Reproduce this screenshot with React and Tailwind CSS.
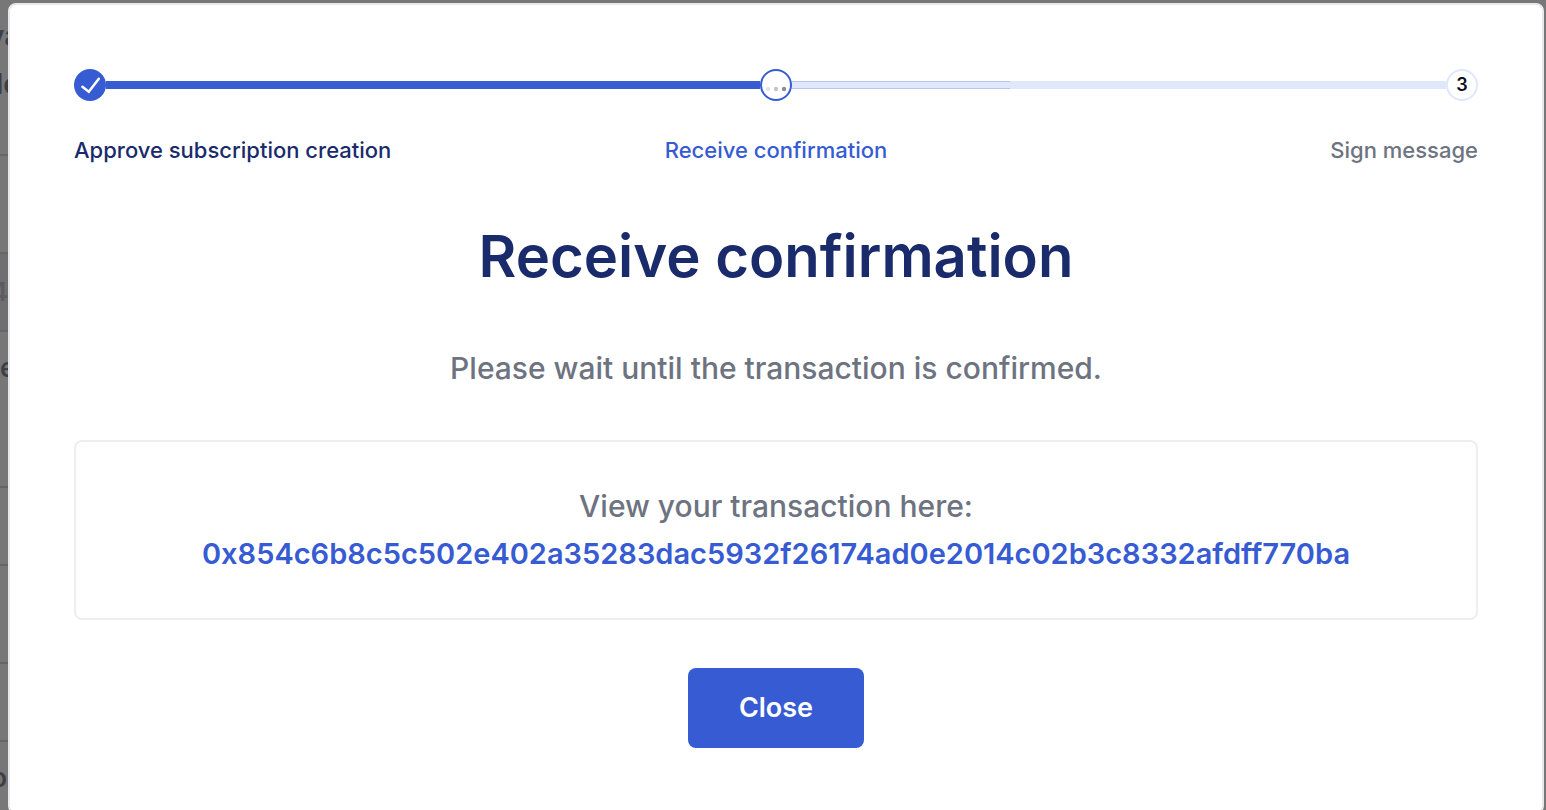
const TX_HASH = '0x854c6b8c5c502e402a35283dac5932f26174ad0e2014c02b3c8332afdff770ba';

function PageEdge() {
  return (
    <div
      aria-hidden="true"
      className="flex w-2 shrink-0 flex-col overflow-hidden whitespace-nowrap text-[26px] leading-8 font-semibold text-[#3d3f47]"
    >
      <div className="flex h-[156px] flex-col items-start border-b-2 border-[#686868] pt-3 text-[28px] leading-12">
        <span className="-ml-3">va</span>
        <span className="-ml-1">lo</span>
      </div>
      <div className="h-[98px] border-b-2 border-[#666666]" />
      <div className="flex h-[78px] items-center justify-end border-b-2 border-[#666666] bg-[#6f6f71] text-[#5d5d61]">
        4
      </div>
      <div className="flex h-[156px] items-start border-b-2 border-[#666666] pt-5">e</div>
      <div className="h-[78px] border-b-2 border-[#666666]" />
      <div className="h-[98px] border-b-2 border-[#666666]" />
      <div className="h-[78px] border-b-2 border-[#666666]" />
      <div className="flex h-[72px] items-center justify-end pr-px">o</div>
    </div>
  );
}

function CheckIcon() {
  return (
    <svg viewBox="0 0 32 32" className="size-8" fill="none" aria-hidden="true">
      <path d="M8.4 17.8 14.8 22.8 24.8 9.8" stroke="white" strokeWidth="2.5" strokeLinecap="round" strokeLinejoin="miter" />
    </svg>
  );
}

function DotsIcon() {
  return (
    <svg viewBox="0 0 28 28" className="size-7" aria-hidden="true">
      <circle cx="6" cy="18" r="2.2" fill="#e4e5e7" />
      <circle cx="14" cy="18" r="2.2" fill="#c4c6cb" />
      <circle cx="22" cy="18" r="2.2" fill="#8a8e99" />
    </svg>
  );
}

function Stepper() {
  return (
    <div>
      <div className="flex items-center">
        <span className="flex size-8 shrink-0 items-center justify-center rounded-full bg-[#375bd2]">
          <CheckIcon />
        </span>
        <span className="h-2 flex-1 bg-[#375bd2]" />
        <span className="flex size-8 shrink-0 items-center justify-center rounded-full border-2 border-[#375bd2] bg-white">
          <DotsIcon />
        </span>
        <span className="flex h-2 flex-1 bg-[#dfe7fb]">
          <span className="w-1/3 border-y border-[#b7c5ee]" />
        </span>
        <span className="flex size-8 shrink-0 items-center justify-center rounded-full border-2 border-[#dfe7fb] bg-white text-lg font-semibold text-[#0b101c]">
          3
        </span>
      </div>
      <ol className="mt-[33px] grid grid-cols-3 text-[22px] leading-8 font-medium">
        <li className="text-[#1a2b6b]">Approve subscription creation</li>
        <li className="text-center text-[#375bd2]">Receive confirmation</li>
        <li className="text-right text-[#6d7380]">Sign message</li>
      </ol>
    </div>
  );
}

export default function App() {
  return (
    <div className="flex h-screen items-start overflow-y-auto bg-[#777777] pr-0.5 font-['Inter',sans-serif] [scrollbar-width:none]">
      <PageEdge />
      <div
        role="dialog"
        aria-modal="true"
        aria-labelledby="dialog-title"
        className="mt-[3px] flex min-w-0 flex-1 flex-col rounded-lg border-2 border-[#e8e9ed] bg-white px-16 py-16"
      >
        <Stepper />
        <h1 id="dialog-title" className="mt-[50px] text-center text-[58px] leading-20 font-semibold text-[#1a2b6b]">
          Receive confirmation
        </h1>
        <p className="mt-12 text-center text-[30px] leading-12 font-medium text-[#6d7380]">
          Please wait until the transaction is confirmed.
        </p>
        <div className="mt-12 rounded-lg border-2 border-[#edeef1] px-8 py-10 text-center text-[30px] leading-12 font-medium text-[#6d7380]">
          <p>View your transaction here:</p>
          <a href={`#${TX_HASH}`} className="block text-[29px] font-semibold break-all text-[#375bd2]">
            {TX_HASH}
          </a>
        </div>
        <button
          type="button"
          className="mt-12 h-20 w-44 self-center rounded-lg bg-[#375bd2] text-[27px] font-semibold text-white"
        >
          Close
        </button>
      </div>
    </div>
  );
}
